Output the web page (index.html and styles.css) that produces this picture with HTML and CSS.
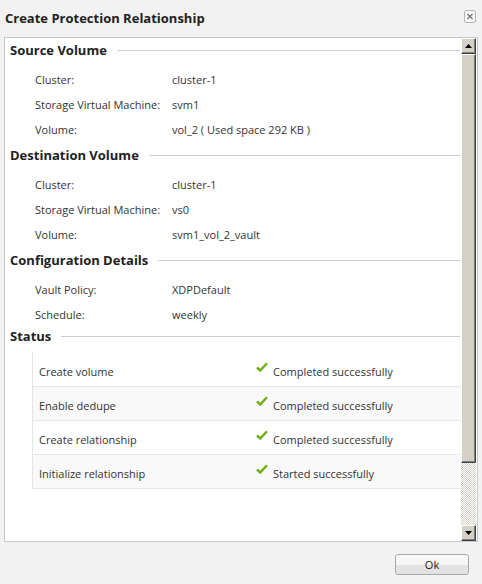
FILE: index.html
```html
<!DOCTYPE html>
<html>
<head>
<meta charset="utf-8">
<link rel="stylesheet" href="styles.css">
</head>
<body>
<div class="dialog">
  <div class="titlebar">
    <span class="title">Create Protection Relationship</span>
    <span class="close"><svg width="12" height="13" viewBox="0 0 12 13"><path d="M3 3.5 L9 9.5 M9 3.5 L3 9.5" stroke="#6a6a6a" stroke-width="1.3" fill="none"/></svg></span>
  </div>
  <div class="panel">
    <div class="content">
      <div class="section-head first"><span>Source Volume</span><i></i></div>
      <div class="rows">
        <div class="row"><span class="lbl">Cluster:</span><span>cluster-1</span></div>
        <div class="row"><span class="lbl">Storage Virtual Machine:</span><span>svm1</span></div>
        <div class="row"><span class="lbl">Volume:</span><span>vol_2 ( Used space 292 KB )</span></div>
      </div>
      <div class="section-head"><span>Destination Volume</span><i></i></div>
      <div class="rows">
        <div class="row"><span class="lbl">Cluster:</span><span>cluster-1</span></div>
        <div class="row"><span class="lbl">Storage Virtual Machine:</span><span>vs0</span></div>
        <div class="row"><span class="lbl">Volume:</span><span>svm1_vol_2_vault</span></div>
      </div>
      <div class="section-head"><span>Configuration Details</span><i></i></div>
      <div class="rows">
        <div class="row"><span class="lbl">Vault Policy:</span><span>XDPDefault</span></div>
        <div class="row"><span class="lbl">Schedule:</span><span>weekly</span></div>
      </div>
      <div class="section-head status-head"><span>Status</span><i></i></div>
      <div class="status">
        <div class="srow"><span class="task">Create volume</span><span class="res"><svg class="chk" width="12" height="10" viewBox="0 0 12 10"><path d="M1 5.5 L4.2 8.5 L11 1.2" stroke="#6fad14" stroke-width="2.4" fill="none"/></svg>Completed successfully</span></div>
        <div class="srow alt"><span class="task">Enable dedupe</span><span class="res"><svg class="chk" width="12" height="10" viewBox="0 0 12 10"><path d="M1 5.5 L4.2 8.5 L11 1.2" stroke="#6fad14" stroke-width="2.4" fill="none"/></svg>Completed successfully</span></div>
        <div class="srow"><span class="task">Create relationship</span><span class="res"><svg class="chk" width="12" height="10" viewBox="0 0 12 10"><path d="M1 5.5 L4.2 8.5 L11 1.2" stroke="#6fad14" stroke-width="2.4" fill="none"/></svg>Completed successfully</span></div>
        <div class="srow alt"><span class="task">Initialize relationship</span><span class="res"><svg class="chk" width="12" height="10" viewBox="0 0 12 10"><path d="M1 5.5 L4.2 8.5 L11 1.2" stroke="#6fad14" stroke-width="2.4" fill="none"/></svg>Started successfully</span></div>
      </div>
    </div>
    <div class="scrollbar">
      <div class="sbtn"><svg width="7" height="4" viewBox="0 0 7 4"><path d="M3.5 0 L7 4 L0 4 Z" fill="#000"/></svg></div>
      <div class="thumb"></div>
      <div class="track"></div>
      <div class="sbtn"><svg width="7" height="4" viewBox="0 0 7 4"><path d="M0 0 L7 0 L3.5 4 Z" fill="#000"/></svg></div>
    </div>
  </div>
  <div class="footer">
    <button class="ok">Ok</button>
  </div>
</div>
</body>
</html>
```

FILE: styles.css
```css
html, body {
  margin: 0;
  padding: 0;
  background: #f2f2f2;
}
body {
  font-family: "Open Sans", "DejaVu Sans", sans-serif;
  font-size: 11px;
  color: #333;
  width: 482px;
  height: 584px;
  overflow: hidden;
}
.dialog {
  display: flex;
  flex-direction: column;
  height: 584px;
}
.titlebar {
  height: 37px;
  display: flex;
  align-items: center;
  justify-content: space-between;
  padding: 0 6px 0 5px;
  box-sizing: border-box;
}
.title {
  font-weight: bold;
  font-size: 13px;
  color: #222;
  margin-top: -1px;
}
.close {
  width: 12px;
  height: 13px;
  border: 1px solid #b8b8b8;
  border-radius: 2px;
  background: #f6f6f6;
  display: flex;
  margin-top: -4px;
  box-sizing: border-box;
  align-items: center;
  justify-content: center;
}
.close svg { display: block; }
.panel {
  margin: 0 4px 0 4px;
  height: 505px;
  border: 1px solid #c8c8c8;
  background: #fff;
  display: flex;
  box-sizing: border-box;
}
.content {
  flex: 1;
  overflow: hidden;
  padding: 2px 0 0 5px;
}
.section-head {
  display: flex;
  align-items: center;
  height: 20px;
  font-weight: bold;
  font-size: 13px;
  color: #222;
  margin-top: 3px;
}
.section-head.first { margin-top: 0; }
.section-head.status-head { margin-top: -1px; }
.section-head i {
  flex: 1;
  border-top: 1px solid #cfcfcf;
  margin-left: 10px;
  margin-right: 1px;
  margin-top: 1px;
}
.rows {
  padding-top: 7px;
  padding-left: 25px;
}
.row {
  height: 25px;
  display: flex;
  align-items: center;
}
.lbl {
  width: 137px;
}
.status {
  margin: 6px 0 0 22px;
  border-left: 1px solid #e4e4e4;
  padding-top: 1px;
}
.srow {
  height: 34px;
  border-bottom: 1px solid #e6e6e6;
  display: flex;
  align-items: center;
  background: #fff;
  box-sizing: border-box;
  padding-top: 3px;
}
.srow.alt { background: #f9f9f9; }
.task {
  width: 223px;
  padding-left: 6px;
  box-sizing: border-box;
}
.res {
  display: flex;
  align-items: center;
}
.chk {
  margin-right: 5px;
  margin-top: -8px;
}
.scrollbar {
  width: 15px;
  display: flex;
  flex-direction: column;
  margin-right: 1px;
}
.sbtn, .thumb {
  background: #d4d0c8;
  border-top: 1px solid #fff;
  border-left: 1px solid #fff;
  border-right: 1px solid #404040;
  border-bottom: 1px solid #404040;
  box-shadow: inset -1px -1px 0 #808080;
  box-sizing: border-box;
}
.sbtn {
  height: 16px;
  display: flex;
  align-items: center;
  justify-content: center;
}
.sbtn svg { display: block; }
.thumb {
  height: 409px;
}
.track {
  flex: 1;
  background: repeating-conic-gradient(#d4d0c8 0 25%, #fff 0 50%) 0 0 / 2px 2px;
}
.footer {
  display: flex;
  justify-content: flex-end;
  padding: 12px 13px 0 0;
}
.ok {
  width: 74px;
  height: 21px;
  border: 1px solid #a8a8a8;
  border-radius: 3px;
  background: linear-gradient(#fafafa 0, #f4f4f4 50%, #e2e2e2 50%, #e2e2e2 100%);
  font-family: "Open Sans", "DejaVu Sans", sans-serif;
  font-size: 11px;
  color: #222;
  padding: 0;
}
```
